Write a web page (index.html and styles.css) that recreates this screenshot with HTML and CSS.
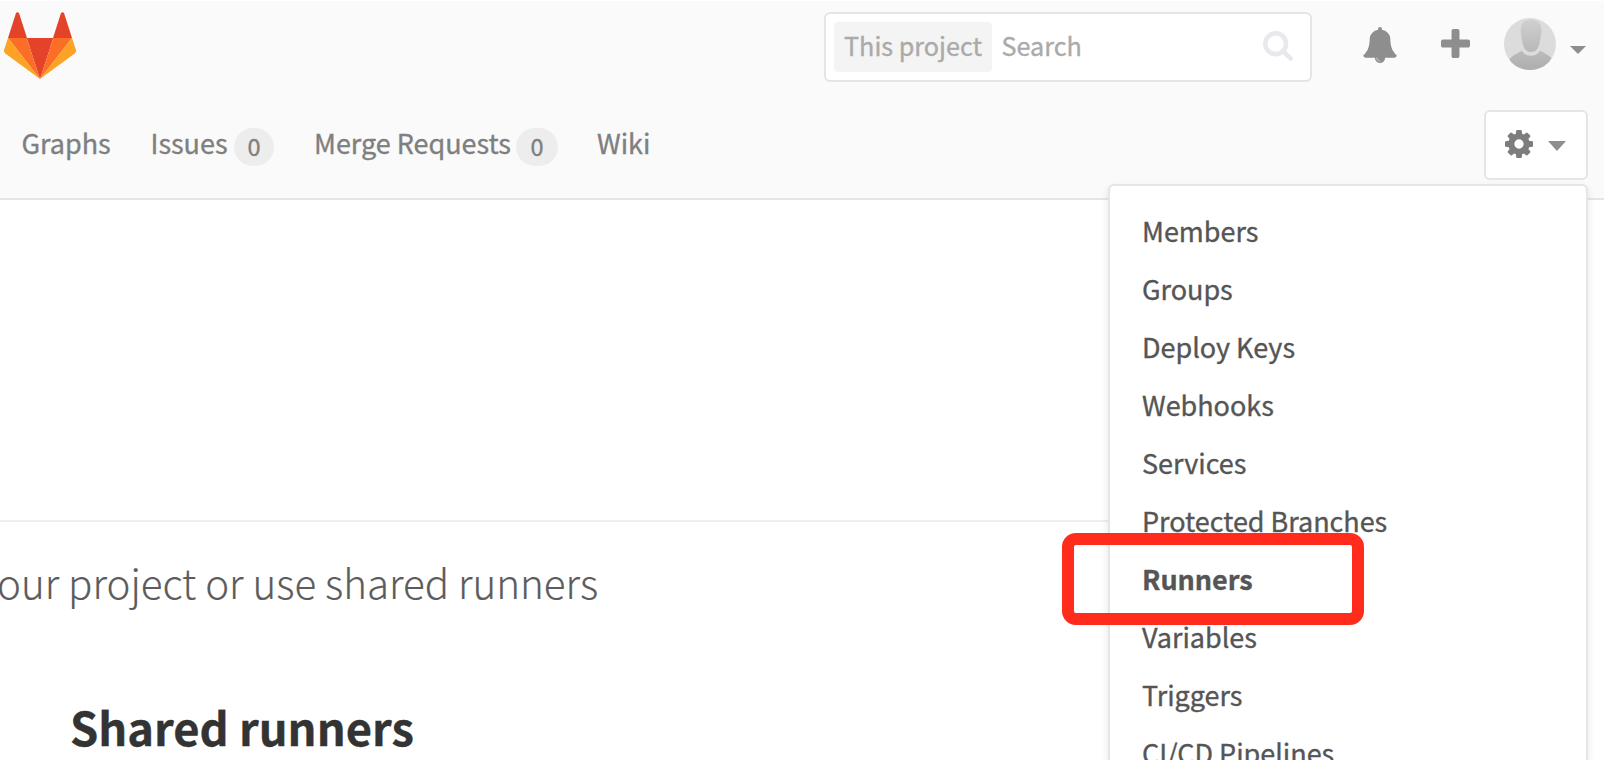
FILE: index.html
```html
<!DOCTYPE html>
<html lang="en">
<head>
<meta charset="utf-8">
<title>Runners</title>
<link rel="stylesheet" href="styles.css">
</head>
<body>
<header class="header">
  <div class="topbar">
    <svg class="logo" viewBox="4 12 72 67">
      <path fill="#e24329" d="M40 79 26.700 38H53.300zM8 38 16 13Q17.500 11.300 19 13L27 38zM72 38 64 13Q62.500 11.300 61 13L53 38z"/>
      <path fill="#fc6d26" d="M40 79 26.700 38H8zM40 79 53.300 38H72z"/>
      <path fill="#fca326" d="M8 38 4 50Q3.600 52 5 53.200L40 79zM72 38 76 50Q76.400 52 75 53.200L40 79z"/>
    </svg>
    <div class="search">
      <span class="scope">This project</span>
      <span class="placeholder">Search</span>
      <svg class="search-icon" viewBox="64 128 1664 1664"><path d="M1216 832q0-185-131.500-316.500t-316.500-131.500-316.500 131.500-131.500 316.500 131.500 316.500 316.500 131.500 316.500-131.500 131.500-316.500zm512 832q0 52-38 90t-90 38q-54 0-90-38l-343-342q-179 124-399 124-143 0-273.500-55.500t-225-150-150-225-55.500-273.500 55.500-273.500 150-225 225-150 273.500-55.500 273.500 55.500 225 150 150 225 55.500 273.500q0 220-124 399l343 343q37 37 37 90z"/></svg>
    </div>
    <svg class="bell" viewBox="64 0 1664 1792"><path d="M912 1696q0-16-16-16-59 0-101.500-42.500t-42.500-101.500q0-16-16-16t-16 16q0 73 51.500 124.500t124.500 51.500q16 0 16-16zm816-288q0 52-38 90t-90 38h-448q0 106-75 181t-181 75-181-75-75-181h-448q-52 0-90-38t-38-90q50-42 91-88t85-119.500 74.500-158.500 50-206 19.500-260q0-152 117-282.500t307-158.500q-8-19-8-39 0-40 28-68t68-28 68 28 28 68q0 20-8 39 190 28 307 158.500t117 282.500q0 139 19.500 260t50 206 74.500 158.500 85 119.500 91 88z"/></svg>
    <svg class="plus" viewBox="192 128 1408 1408"><path d="M1600 736v192q0 40-28 68t-68 28h-416v416q0 40-28 68t-68 28h-192q-40 0-68-28t-28-68v-416h-416q-40 0-68-28t-28-68v-192q0-40 28-68t68-28h416v-416q0-40 28-68t68-28h192q40 0 68 28t28 68v416h416q40 0 68 28t28 68z"/></svg>
    <svg class="avatar" viewBox="0 0 52 52">
      <defs>
        <clipPath id="disc"><circle cx="26" cy="26" r="26"/></clipPath>
        <linearGradient id="head" x2="0" y2="1"><stop stop-color="#d0d0d0"/><stop offset="1" stop-color="#b8b8b8"/></linearGradient>
        <linearGradient id="torso" x2="0" y2="1"><stop stop-color="#bcbcbc"/><stop offset="1" stop-color="#adadad"/></linearGradient>
      </defs>
      <g clip-path="url(#disc)">
        <path fill="#dcdcdc" d="M0 0h52v52H0z"/>
        <path fill="url(#head)" d="M27 1.500c6 0 10.500 4 10.500 10.500 0 5-1.200 9-2 13-1.200 6-4 9-8.500 9s-7.300-3-8.500-9c-.8-4-1.800-8-1.800-13C16.700 5.500 21 1.500 27 1.500z"/>
        <path fill="url(#torso)" d="M5.500 42c0-2 3-4.500 12.500-9.300 2 3.300 5 5 9 5s7-1.700 9-5C45 37 48 40 48 42v10H5.500z"/>
      </g>
    </svg>
    <i class="caret caret-user"></i>
  </div>
  <nav class="nav">
    <a class="link graphs">Graphs</a>
    <a class="link issues">Issues</a><span class="count">0</span>
    <a class="link merges">Merge Requests</a><span class="count count-merges">0</span>
    <a class="link wiki">Wiki</a>
    <div class="settings">
      <svg class="cog" viewBox="128 128 1536 1536"><path d="M1152 896q0-106-75-181t-181-75-181 75-75 181 75 181 181 75 181-75 75-181zm512-109v222q0 12-8 23t-20 13l-185 28q-19 54-39 91 35 50 107 138 10 12 10 25t-9 23q-27 37-99 108t-94 71q-12 0-26-9l-138-108q-44 23-91 38-16 136-29 186-7 28-36 28h-222q-14 0-24.500-8.500t-11.500-21.500l-28-184q-49-16-90-37l-141 107q-10 9-25 9-14 0-25-11-126-114-165-168-7-10-7-23 0-12 8-23 15-21 51-66.500t54-70.500q-27-50-41-99l-183-27q-13-2-21-12.500t-8-23.500v-222q0-12 8-23t19-13l186-28q14-46 39-92-40-57-107-138-10-12-10-24 0-10 9-23 26-36 98.500-107.500t94.500-71.500q13 0 26 10l138 107q44-23 91-38 16-136 29-186 7-28 36-28h222q14 0 24.500 8.500t11.500 21.500l28 184q49 16 90 37l142-107q9-9 24-9 13 0 25 10 129 119 165 170 7 8 7 22 0 12-8 23-15 21-51 66.500t-54 70.500q26 50 41 98l183 28q13 2 21 12.500t8 23.500z"/></svg>
      <i class="caret caret-settings"></i>
    </div>
  </nav>
</header>
<main class="content">
  <p class="lead">our project or use shared runners</p>
  <h2 class="title">Shared runners</h2>
</main>
<ul class="menu">
  <li>Members</li>
  <li>Groups</li>
  <li>Deploy Keys</li>
  <li>Webhooks</li>
  <li>Services</li>
  <li>Protected Branches</li>
  <li class="active">Runners</li>
  <li>Variables</li>
  <li>Triggers</li>
  <li>CI/CD Pipelines</li>
</ul>
<div class="highlight"></div>
</body>
</html>
```
FILE: styles.css
```css
* { box-sizing: border-box; }
body {
  margin: 0;
  width: 1604px;
  height: 760px;
  position: relative;
  overflow: hidden;
  background: #fff;
  font-family: "Noto Sans CJK SC", "Noto Sans", sans-serif;
  font-size: 27px;
  -webkit-text-stroke: .35px;
}
svg { display: block; flex: none; }
.header {
  height: 200px;
  background: #fafafa;
  border-top: 1px solid #fff;
  border-bottom: 2px solid #e5e5e5;
}
.topbar { display: flex; align-items: flex-start; height: 109px; }
.logo { width: 72px; height: 67px; margin: 11px 0 0 4px; }
.search {
  display: flex;
  align-items: center;
  width: 488px;
  height: 70px;
  margin: 11px 0 0 748px;
  padding: 0 17px 0 8px;
  background: #fff;
  border: 2px solid #e5e5e5;
  border-radius: 6px;
  font-size: 25.200px;
  color: #aaa;
}
.scope {
  width: 158px;
  height: 50px;
  padding-left: 10px;
  line-height: 46px;
  background: #f4f4f4;
  border-radius: 4px;
  white-space: nowrap;
}
.placeholder { padding-left: 9.500px; line-height: 46px; height: 50px; }
.search-icon { width: 30px; height: 30px; margin: -2px 0 0 auto; fill: #e7e9ed; }
.bell { width: 34px; height: 36px; margin: 26px 0 0 51px; fill: #8e8e8e; }
.plus { width: 29px; height: 29px; margin: 28px 0 0 44px; fill: #8e8e8e; }
.avatar { width: 52px; height: 52px; margin: 17px 0 0 34px; }
.caret {
  flex: none;
  border: 0 solid transparent;
  border-top-color: #8e8e8e;
}
.caret-user { border-width: 8px 8px 0; margin: 45px 0 0 14px; }
.nav { display: flex; align-items: flex-start; color: #7f7f7f; white-space: nowrap; }
.link { line-height: 40px; margin-top: 13px; letter-spacing: -.03px; }
.graphs { width: 129.500px; padding-left: 21.500px; }
.issues { width: 104.500px; padding-left: 21px; }
.count {
  width: 40px;
  height: 38px;
  margin-top: 18px;
  border-radius: 19px;
  background: #ededed;
  font-size: 23.500px;
  line-height: 36px;
  text-align: center;
}
.merges { width: 242px; padding-left: 40px; }
.count-merges { width: 42px; }
.wiki { padding-left: 39px; }
.settings {
  display: flex;
  width: 104px;
  height: 70px;
  margin-left: auto;
  margin-right: 16px;
  background: #fff;
  border: 2px solid #e5e5e5;
  border-radius: 6px;
}
.cog { width: 28px; height: 28px; margin: 18px 0 0 19px; fill: #7f7c7c; }
.caret-settings { border-width: 10px 9px 0; margin: 29px 0 0 15px; height: 0; }
.content { margin: 320px 32px 0 0; border-top: 2px solid #eee; }
.lead {
  margin: 35px 0 0 -3px;
  font-size: 40.300px;
  line-height: 50px;
  font-weight: 300;
  color: #5c5c5c;
  -webkit-text-stroke: .15px;
}
.title {
  margin: 89px 0 0 70px;
  font-size: 45.300px;
  line-height: 60px;
  font-weight: 700;
  color: #333;
}
.menu {
  position: absolute;
  left: 1108px;
  top: 184px;
  width: 480px;
  height: 576px;
  margin: 0;
  padding: 16px 0 0 32px;
  overflow: hidden;
  list-style: none;
  background: #fff;
  border: 2px solid #e5e5e5;
  border-bottom: 0;
  border-radius: 6px 6px 0 0;
  box-shadow: 0 4px 8px rgba(0, 0, 0, .1);
  line-height: 58px;
  letter-spacing: -.03px;
  color: #555;
}
.active { font-weight: 700; }
.highlight {
  position: absolute;
  left: 1062px;
  top: 533px;
  width: 302px;
  height: 92px;
  border: 12px solid #ff2b1c;
  border-radius: 14px;
}
```
